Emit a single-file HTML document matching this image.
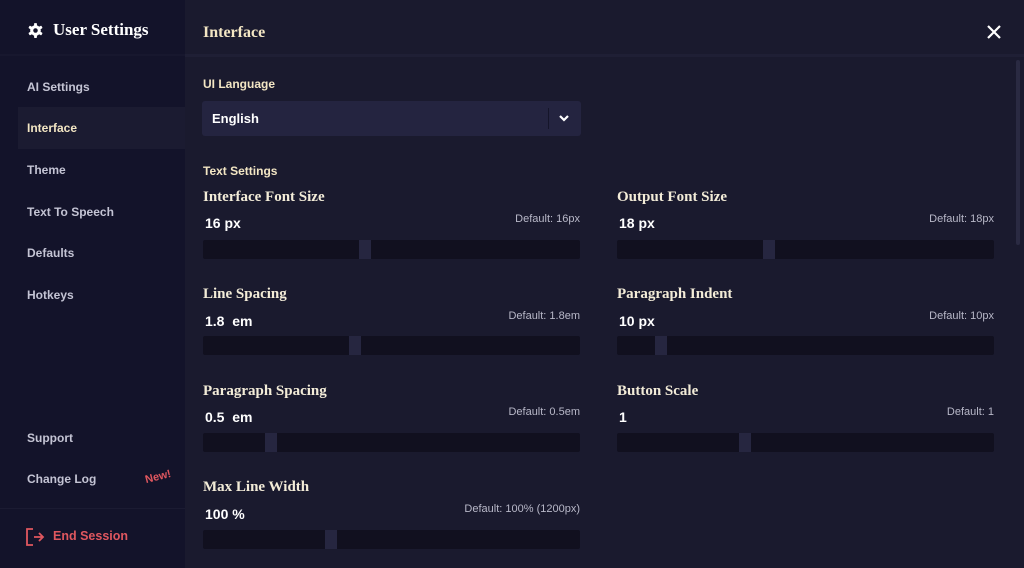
<!DOCTYPE html>
<html><head><style>
*{margin:0;padding:0;box-sizing:border-box}
body{width:1024px;height:568px;overflow:hidden;background:#1a1a2e;font-family:"Liberation Sans",sans-serif;position:relative}
.a{position:absolute;white-space:nowrap}
#side{position:absolute;left:0;top:0;width:185px;height:568px;background:#13132a}
.ni{position:absolute;left:27px;font-size:12px;font-weight:bold;color:#c4c4d4}
.t{font-family:"Liberation Serif",serif;font-weight:bold;font-size:15px;color:#f3ecd8}
.v{font-size:14px;font-weight:bold;color:#fff}
.d{font-size:11px;color:#b8b8c8}
.tr{position:absolute;height:19px;background:#11101f;border-radius:2px}
.th{position:absolute;width:12px;height:19px;background:#262640}
</style></head><body>
<div id="side">
 <svg class="a" style="left:27px;top:22px" width="17" height="17" viewBox="0 0 24 24"><g fill="#fff"><circle cx="12" cy="12" r="7.5"/><rect x="10" y="1.5" width="4" height="21" rx="1"/><rect x="10" y="1.5" width="4" height="21" rx="1" transform="rotate(60 12 12)"/><rect x="10" y="1.5" width="4" height="21" rx="1" transform="rotate(120 12 12)"/></g><circle cx="12" cy="12" r="3.2" fill="#13132a"/></svg>
 <div class="a" style="left:53px;top:20px;font-family:'Liberation Serif',serif;font-weight:bold;font-size:17px;color:#fff">User Settings</div>
 <div class="a" style="left:0;top:54px;width:185px;height:2px;background:#17172e"></div>
 <div class="ni" style="top:80px">AI Settings</div>
 <div class="a" style="left:18px;top:107px;width:167px;height:42px;background:#1b1b31"></div>
 <div class="ni" style="top:121px;color:#f3e6c4">Interface</div>
 <div class="ni" style="top:163px">Theme</div>
 <div class="ni" style="top:205px">Text To Speech</div>
 <div class="ni" style="top:246px">Defaults</div>
 <div class="ni" style="top:288px">Hotkeys</div>
 <div class="ni" style="top:431px">Support</div>
 <div class="ni" style="top:472px">Change Log</div>
 <div class="a" style="left:145px;top:471px;font-size:11px;font-weight:bold;color:#e0575f;transform:rotate(-14deg)">New!</div>
 <div class="a" style="left:0;top:508px;width:185px;height:1px;background:#1b1b32"></div>
 <svg class="a" style="left:25px;top:527px" width="20" height="20" viewBox="0 0 20 20" fill="none" stroke="#e0575f" stroke-width="1.8"><path d="M8 2H2v16h6M9 10h9M14 6l4 4-4 4"/></svg>
 <div class="a" style="left:53px;top:529px;font-size:12.5px;font-weight:bold;color:#e0575f">End Session</div>
</div>
<div class="a" style="left:203px;top:24px;font-family:'Liberation Serif',serif;font-weight:bold;font-size:16px;color:#f3e6c4">Interface</div>
<svg class="a" style="left:987px;top:25px" width="14" height="14" viewBox="0 0 14 14" stroke="#fff" stroke-width="2.2"><path d="M1 1l12 12M13 1L1 13"/></svg>
<div class="a" style="left:185px;top:54px;width:839px;height:3px;background:#1f1f35"></div>
<div class="a" style="left:1016px;top:60px;width:4px;height:185px;background:#2a2a42;border-radius:2px"></div>
<div class="a" style="left:203px;top:77px;font-size:12px;font-weight:bold;color:#f3e6c4">UI Language</div>
<div class="a" style="left:202px;top:101px;width:379px;height:35px;background:#242440;border-radius:3px"></div>
<div class="a" style="left:212px;top:111px;font-size:13px;font-weight:bold;color:#fff">English</div>
<div class="a" style="left:548px;top:108px;width:1px;height:21px;background:#15152a"></div>
<svg class="a" style="left:558px;top:114px" width="12" height="8" viewBox="0 0 12 8" fill="none" stroke="#fff" stroke-width="2.2"><path d="M2 2l4 4 4-4"/></svg>
<div class="a" style="left:203px;top:164px;font-size:12px;font-weight:bold;color:#f3e6c4">Text Settings</div>

<div class="a t" style="left:203px;top:189px">Interface Font Size</div>
<div class="a v" style="left:205px;top:215px">16 px</div>
<div class="a d" style="right:444px;top:213px">Default: 16px</div>
<div class="tr" style="left:203px;top:240px;width:377px"></div><div class="th" style="left:359px;top:240px"></div>

<div class="a t" style="left:617px;top:189px">Output Font Size</div>
<div class="a v" style="left:619px;top:215px">18 px</div>
<div class="a d" style="right:30px;top:213px">Default: 18px</div>
<div class="tr" style="left:617px;top:240px;width:377px"></div><div class="th" style="left:763px;top:240px"></div>

<div class="a t" style="left:203px;top:286px">Line Spacing</div>
<div class="a v" style="left:205px;top:313px">1.8&nbsp; em</div>
<div class="a d" style="right:444px;top:310px">Default: 1.8em</div>
<div class="tr" style="left:203px;top:336px;width:377px"></div><div class="th" style="left:349px;top:336px"></div>

<div class="a t" style="left:617px;top:286px">Paragraph Indent</div>
<div class="a v" style="left:619px;top:313px">10 px</div>
<div class="a d" style="right:30px;top:310px">Default: 10px</div>
<div class="tr" style="left:617px;top:336px;width:377px"></div><div class="th" style="left:655px;top:336px"></div>

<div class="a t" style="left:203px;top:383px">Paragraph Spacing</div>
<div class="a v" style="left:205px;top:409px">0.5&nbsp; em</div>
<div class="a d" style="right:444px;top:406px">Default: 0.5em</div>
<div class="tr" style="left:203px;top:433px;width:377px"></div><div class="th" style="left:265px;top:433px"></div>

<div class="a t" style="left:617px;top:383px">Button Scale</div>
<div class="a v" style="left:619px;top:409px">1</div>
<div class="a d" style="right:30px;top:406px">Default: 1</div>
<div class="tr" style="left:617px;top:433px;width:377px"></div><div class="th" style="left:739px;top:433px"></div>

<div class="a t" style="left:203px;top:479px">Max Line Width</div>
<div class="a v" style="left:205px;top:506px">100 %</div>
<div class="a d" style="right:444px;top:503px">Default: 100% (1200px)</div>
<div class="tr" style="left:203px;top:530px;width:377px"></div><div class="th" style="left:325px;top:530px"></div>
</body></html>
